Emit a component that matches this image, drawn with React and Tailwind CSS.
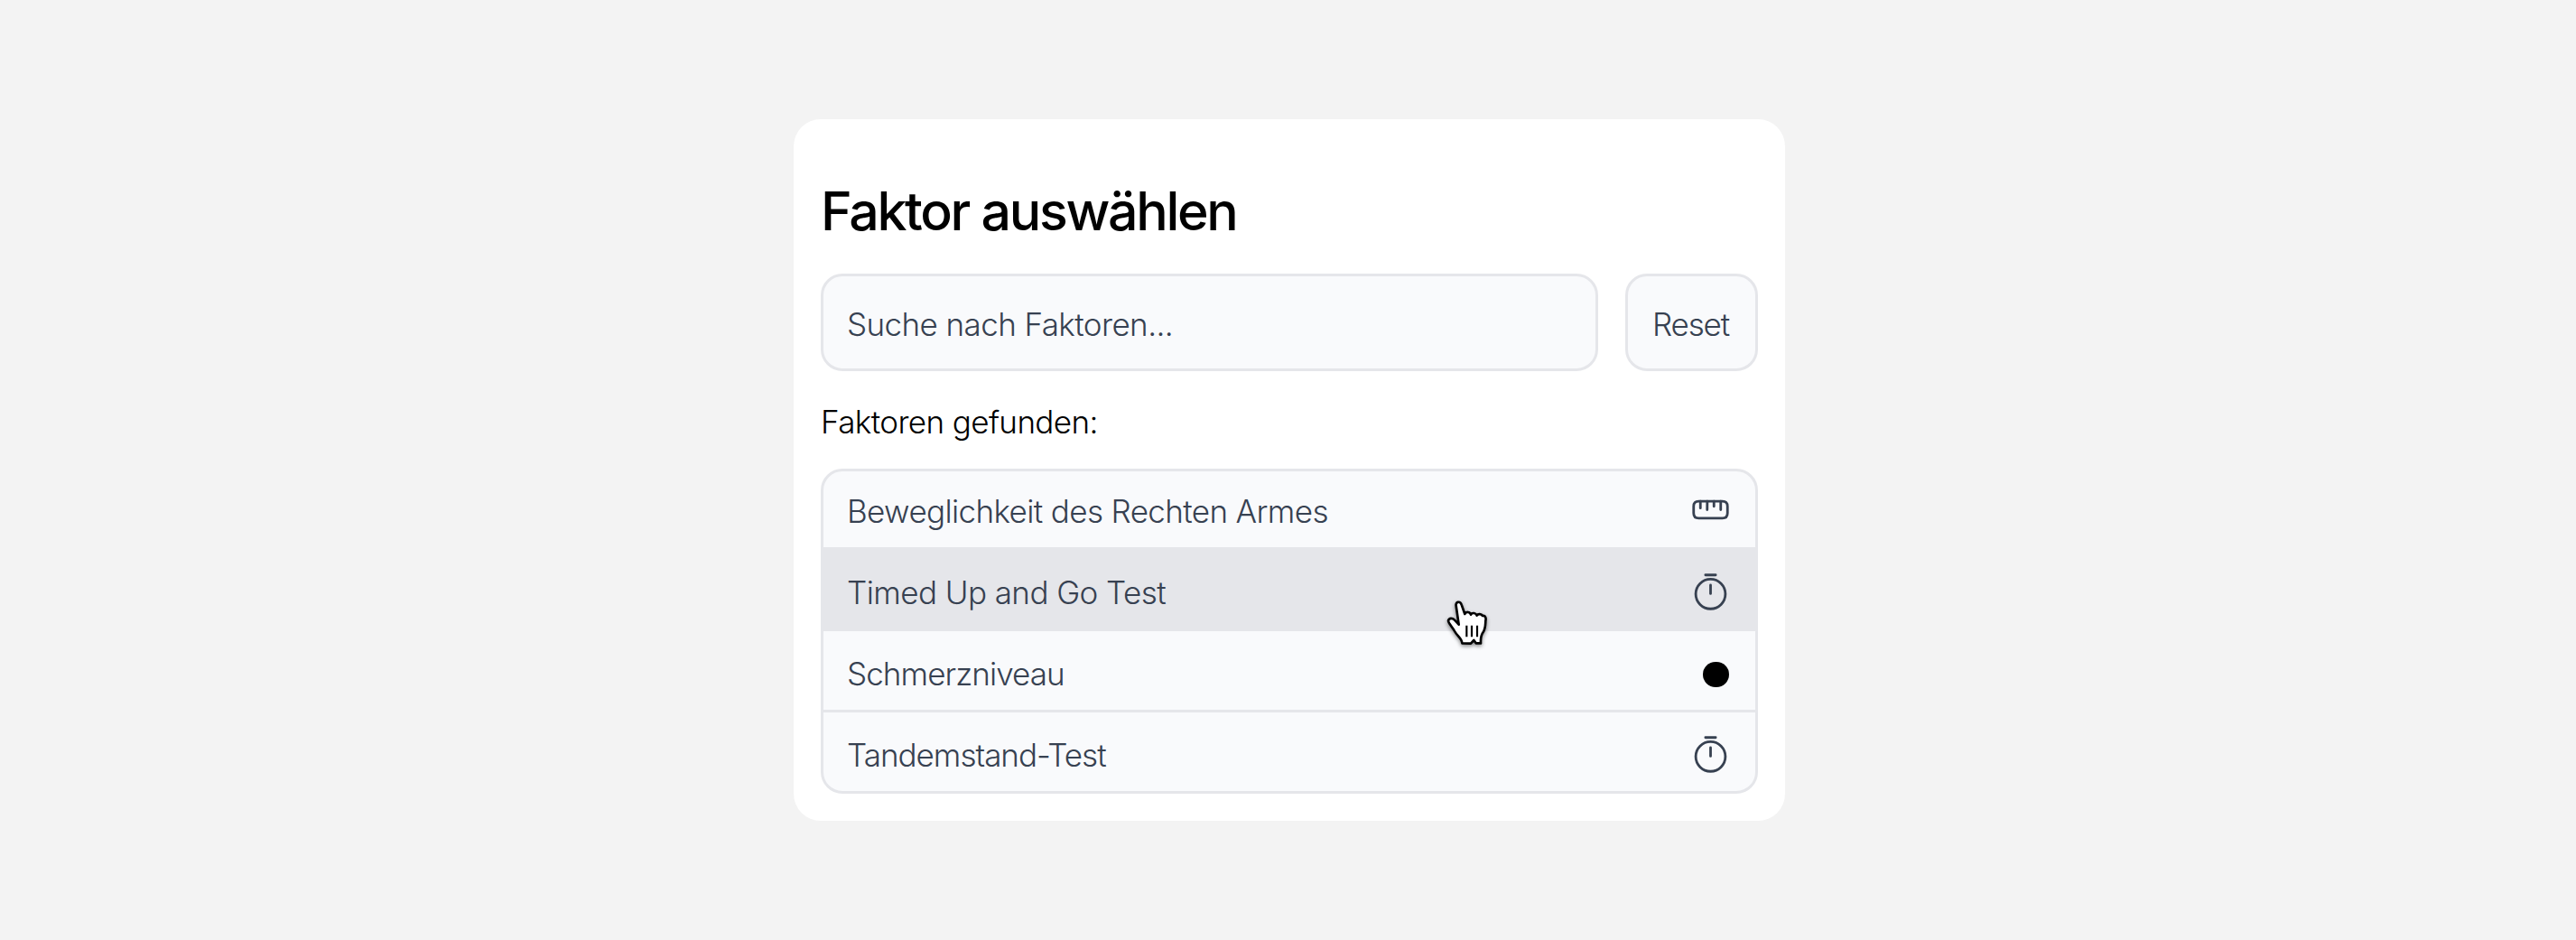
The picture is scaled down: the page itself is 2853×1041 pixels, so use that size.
import React from 'react';

function RulerIcon() {
  return (
    <svg viewBox="0 0 24 24" fill="none" stroke="#374151" strokeWidth="1.5" strokeLinecap="round" className="mt-[20px] size-[45px]">
      <path d="M5 17h14c2 0 3-1 3-3v-4c0-2-1-3-3-3H5c-2 0-3 1-3 3v4c0 2 1 3 3 3z" />
      <path d="M18 7v5M6 7v4M10.05 7 10 12M14 7v3" />
    </svg>
  );
}

function TimerIcon() {
  return (
    <svg viewBox="0 0 24 24" fill="none" stroke="#374151" strokeWidth="1.5" strokeLinecap="round" className="mt-[24px] size-[45px]">
      <circle cx="12" cy="13.25" r="8.75" />
      <path d="M12 8v5M9 2h6" />
    </svg>
  );
}

function HandCursor() {
  return (
    <svg viewBox="0 0 150 180" className="absolute left-[688px] top-[138px] h-[60px] w-[50px] overflow-visible drop-shadow-[0_2px_2px_rgba(0,0,0,0.45)]">
      <path
        d="M38 33C35 18 52 16 56 29L67 60C71 51 84 52 87 62C91 54 104 56 107 65C111 58 122 59 126 66C136 64 138 74 136 83C135 98 136 108 128 120C120 131 119 140 120 157L104 157L97 147L87 158L58 157C58 141 42 134 33 117C27 105 12 91 12 82C15 72 26 73 33 80L47 95Z"
        fill="#fff"
        stroke="#000"
        strokeWidth="8"
        strokeLinejoin="round"
      />
      <path d="M73 98V136M90 98V136M108 98V136" stroke="#000" strokeWidth="6.5" />
    </svg>
  );
}

const field = 'border-[3px] border-[#e5e6ea] bg-[#f9fafc] rounded-[24px] text-[#374151]';

const factors = [
  { name: 'Beweglichkeit des Rechten Armes', tracking: 'tracking-[-0.63px]', icon: <RulerIcon />, row: 'h-[84px]', label: 'pt-[17px]' },
  { name: 'Timed Up and Go Test', tracking: 'tracking-[-0.57px]', icon: <TimerIcon />, row: 'h-[90px] border-t-[3px] bg-[#e5e6ea]', label: 'pt-[20px]' },
  { name: 'Schmerzniveau', tracking: 'tracking-[-0.92px]', icon: <span className="mr-[2.5px] mt-[33.5px] size-[28.5px] rounded-full bg-black" />, row: 'h-[90px] border-t-[3px]', label: 'pt-[20px]' },
  { name: 'Tandemstand-Test', tracking: 'tracking-[-1px]', icon: <TimerIcon />, row: 'h-[90px] border-t-[3px]', label: 'pt-[20px]' },
];

export default function App() {
  return (
    <div className="flex h-[1041px] w-full items-start bg-[#f3f3f3] pl-[879px] pt-[132px] font-['Inter',sans-serif] text-[35px] font-light leading-[54px]">
      <main className="w-[1098px] rounded-[30px] bg-white p-[30px]">
        <h1 className="mt-[36px] text-[59px] font-[460] leading-[72px] tracking-[-2.3px] text-black">Faktor auswählen</h1>
        <div className="mt-[33px] flex gap-[30px]">
          <div className={`${field} flex h-[108px] w-[861px] items-center pl-[26px] pt-[3px] tracking-[-0.58px]`}>Suche nach Faktoren...</div>
          <button className={`${field} flex h-[108px] w-[147px] items-center justify-center pr-[2px] pt-[3px] tracking-[-1.2px]`}>Reset</button>
        </div>
        <p className="mt-[29px] tracking-[-0.6px] text-black">Faktoren gefunden:</p>
        <ul className={`${field} relative mt-[25px]`}>
          {factors.map((f) => (
            <li key={f.name} className={`${f.row} flex items-start justify-between border-[#e5e6ea] pl-[26px] pr-[27px]`}>
              <span className={`${f.label} ${f.tracking}`}>{f.name}</span>
              {f.icon}
            </li>
          ))}
          <li className="contents" aria-hidden="true">
            <HandCursor />
          </li>
        </ul>
      </main>
    </div>
  );
}
